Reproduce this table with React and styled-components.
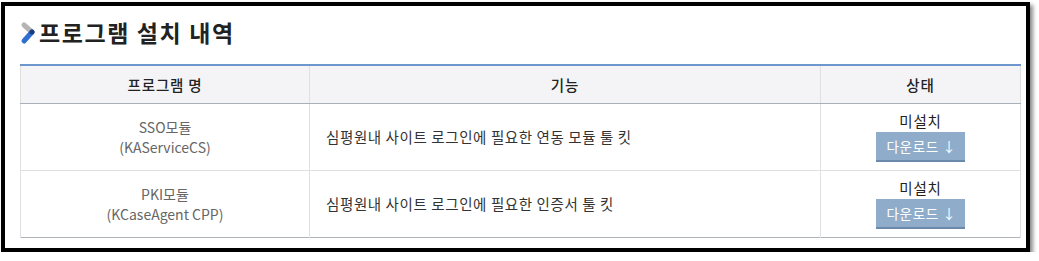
import React from "react";
import styled, { createGlobalStyle } from "styled-components";

const Global = createGlobalStyle`
  html, body { margin: 0; padding: 0; background: #fff; }
  body { font-family: "Noto Sans CJK KR", "Noto Sans", sans-serif; }
`;

const Frame = styled.div`
  box-sizing: border-box;
  margin: 2px 0 0 1px;
  width: 1029px;
  height: 250px;
  border: 4px solid #000;
  box-shadow: 3px 3px 4px rgba(0, 0, 0, 0.45);
  background: #fff;
  padding: 11px 6px 0 14px;
`;

const Heading = styled.h2`
  display: flex;
  align-items: center;
  gap: 2px;
  margin: 0 0 17px 0;
  height: 30px;
  font-size: 23px;
  font-weight: 700;
  color: #222;
  letter-spacing: 1.6px;
`;

const TableWrap = styled.div`
  padding-left: 1px;
`;

const Table = styled.table`
  width: 1000px;
  border-collapse: collapse;
  table-layout: fixed;
  border-top: 2px solid #6d96cc;
  border-bottom: 1px solid #aeb3ba;
`;

const HeadCell = styled.th`
  height: 37px;
  padding: 0;
  background: #f4f4f6;
  border-left: 1px solid #e0e0e0;
  border-right: 1px solid #e0e0e0;
  border-bottom: 1px solid #a9b0bc;
  font-size: 14.5px;
  letter-spacing: 0.8px;
  font-weight: 500;
  color: #222;
  text-align: center;
`;

const Cell = styled.td`
  height: 66px;
  padding: 0 ${(p) => (p.$align === "left" ? "16px" : "0")};
  border: 1px solid #e0e0e0;
  border-top: none;
  font-size: ${(p) => (p.$latin ? "14px" : "14.5px")};
  letter-spacing: ${(p) => (p.$latin ? "0" : "0.6px")};
  line-height: 20px;
  color: ${(p) => p.$color || "#333"};
  text-align: ${(p) => p.$align || "center"};
  vertical-align: middle;
`;

const Row = styled.tr`
  &:last-child td { border-bottom: none; }
`;

const StatusBox = styled.div`
  display: flex;
  flex-direction: column;
  align-items: center;
  gap: 2px;
`;

const StatusText = styled.span`
  font-size: 14.5px;
  letter-spacing: 0.8px;
  line-height: 18px;
  color: #222;
`;

const DownloadButton = styled.button`
  box-sizing: border-box;
  width: 89px;
  height: 30px;
  border: none;
  border-bottom: 2px solid #6b8aab;
  background: #8fadca;
  color: #fff;
  font-family: inherit;
  font-size: 13.5px;
  letter-spacing: 0.6px;
  padding: 0 0 0 2px;
  cursor: pointer;
`;

const Chevron = () => (
  <svg width="18" height="24" viewBox="0 0 18 24" style={{ marginTop: 2 }}>
    <line x1="5" y1="4" x2="13" y2="11" stroke="#b5b5b5" strokeWidth="5" strokeLinecap="round" />
    <line x1="13" y1="11" x2="5" y2="20" stroke="#2f6fd0" strokeWidth="5" strokeLinecap="round" />
    <circle cx="13" cy="11" r="2.5" fill="#1b3f7a" />
  </svg>
);

const rows = [
  { name: "SSO모듈", sub: "(KAServiceCS)", desc: "심평원내 사이트 로그인에 필요한 연동 모듈 툴 킷" },
  { name: "PKI모듈", sub: "(KCaseAgent CPP)", desc: "심평원내 사이트 로그인에 필요한 인증서 툴 킷" },
];

export default function App() {
  return (
    <>
      <Global />
      <Frame>
        <Heading>
          <Chevron />
          프로그램 설치 내역
        </Heading>
        <TableWrap>
          <Table>
            <colgroup>
              <col style={{ width: 289 }} />
              <col style={{ width: 511 }} />
              <col style={{ width: 200 }} />
            </colgroup>
            <thead>
              <tr>
                <HeadCell>프로그램 명</HeadCell>
                <HeadCell>기능</HeadCell>
                <HeadCell>상태</HeadCell>
              </tr>
            </thead>
            <tbody>
              {rows.map((r) => (
                <Row key={r.name}>
                  <Cell $latin $color="#666">
                    {r.name}
                    <br />
                    {r.sub}
                  </Cell>
                  <Cell $align="left">{r.desc}</Cell>
                  <Cell>
                    <StatusBox>
                      <StatusText>미설치</StatusText>
                      <DownloadButton>다운로드 ↓</DownloadButton>
                    </StatusBox>
                  </Cell>
                </Row>
              ))}
            </tbody>
          </Table>
        </TableWrap>
      </Frame>
    </>
  );
}
